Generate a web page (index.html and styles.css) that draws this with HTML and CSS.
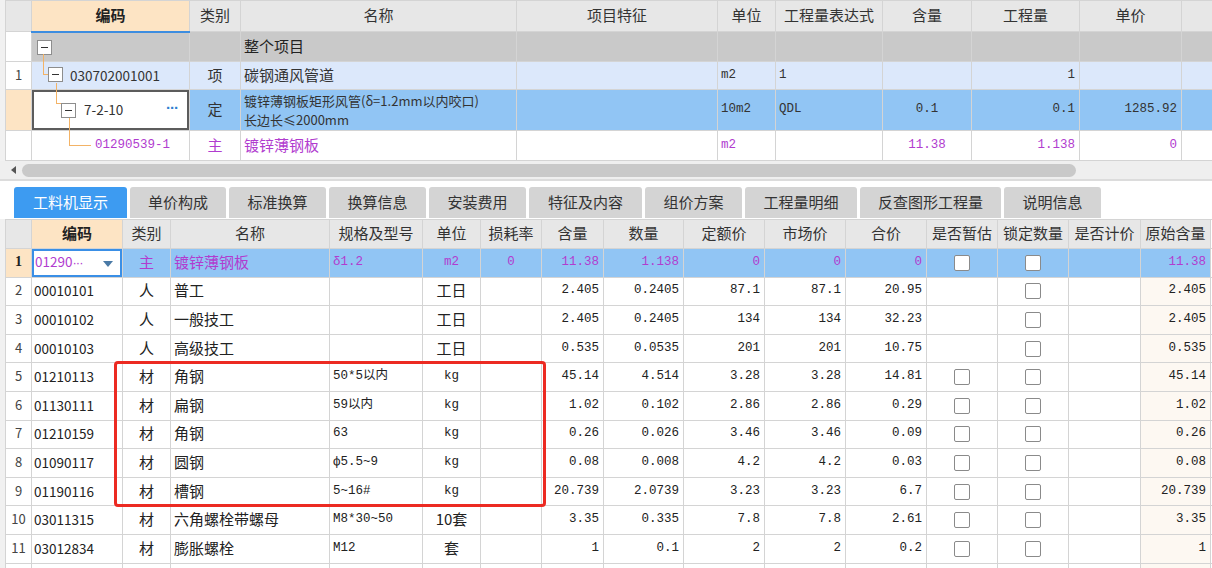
FILE: index.html
```html
<!DOCTYPE html>
<html lang="zh-CN">
<head>
<meta charset="utf-8">
<title>工料机显示</title>
<link rel="stylesheet" href="styles.css">
</head>
<body>
<div class="frame">
  <table class="grid top">
    <colgroup>
      <col style="width:26px"><col style="width:158px"><col style="width:51px"><col style="width:276px"><col style="width:201px"><col style="width:58px"><col style="width:107px"><col style="width:89px"><col style="width:108px"><col style="width:102px"><col style="width:31px">
    </colgroup>
    <tr class="hdr h31">
      <th class="rn"></th><th class="key key-top">编码</th><th>类别</th><th>名称</th><th>项目特征</th><th>单位</th><th>工程量表达式</th><th>含量</th><th>工程量</th><th>单价</th><th></th>
    </tr>
    <tr class="r-all h30">
      <td class="rn"></td>
      <td class="tree"><span class="tb tb0"></span></td>
      <td></td><td class="bold">整个项目</td><td></td><td></td><td></td><td></td><td></td><td></td><td></td>
    </tr>
    <tr class="r-item h28">
      <td class="rn">1</td>
      <td class="tree code1"><span class="elb elb1"></span><span class="tb tb1"></span>030702001001</td>
      <td class="c">项</td><td>碳钢通风管道</td><td></td><td class="m">m2</td><td class="m">1</td><td></td><td class="n">1</td><td></td><td></td>
    </tr>
    <tr class="r-sel h41">
      <td class="rn peach"></td>
      <td class="tree code2 selcell"><span class="elb elb2"></span><span class="tb tb2"></span>7-2-10<span class="dots">···</span></td>
      <td class="c">定</td><td class="wrap">镀锌薄钢板矩形风管(δ=1.2mm以内咬口)<br>长边长≤2000mm</td><td></td><td class="m">10m2</td><td class="m">QDL</td><td class="m c">0.1</td><td class="n">0.1</td><td class="n">1285.92</td><td></td>
    </tr>
    <tr class="r-main h30">
      <td class="rn"></td>
      <td class="tree code3 m"><span class="elb elb3"></span>01290539-1</td>
      <td class="c">主</td><td>镀锌薄钢板</td><td></td><td class="m">m2</td><td></td><td class="m c">11.38</td><td class="n">1.138</td><td class="n">0</td><td></td>
    </tr>
  </table>
</div>

<div class="hscroll">
  <svg class="arrow" width="6" height="8" viewBox="0 0 6 8"><path d="M5 0 L0 4 L5 8 Z" fill="#555"/></svg>
  <div class="thumb"></div>
</div>

<div class="tabs">
  <span class="tab active">工料机显示</span>
  <span class="tab">单价构成</span>
  <span class="tab">标准换算</span>
  <span class="tab">换算信息</span>
  <span class="tab">安装费用</span>
  <span class="tab">特征及内容</span>
  <span class="tab">组价方案</span>
  <span class="tab">工程量明细</span>
  <span class="tab">反查图形工程量</span>
  <span class="tab">说明信息</span>
</div>

<div class="bottom frame">
  <table class="grid bot">
    <colgroup>
      <col style="width:26px"><col style="width:91px"><col style="width:48px"><col style="width:159px"><col style="width:93px"><col style="width:58px"><col style="width:61px"><col style="width:62px"><col style="width:80px"><col style="width:81px"><col style="width:81px"><col style="width:81px"><col style="width:71px"><col style="width:71px"><col style="width:72px"><col style="width:70px"><col style="width:2px">
    </colgroup>
    <tr class="hdr hb">
      <th class="rn"></th><th class="key">编码</th><th>类别</th><th>名称</th><th>规格及型号</th><th>单位</th><th>损耗率</th><th>含量</th><th>数量</th><th>定额价</th><th>市场价</th><th>合价</th><th>是否暂估</th><th>锁定数量</th><th>是否计价</th><th>原始含量</th><th class="edge"></th>
    </tr>
    <tr class="row r-first">
      <td class="rn peach first-num">1</td>
      <td class="codecell"><span class="codetxt">01290<span class="ell">···</span></span><svg class="dd" width="10" height="6" viewBox="0 0 10 6"><path d="M0 0 H10 L5 6 Z" fill="#4a7aa6"/></svg></td>
      <td class="c">主</td><td>镀锌薄钢板</td><td class="m">δ1.2</td><td class="m c">m2</td><td class="m c">0</td><td class="n">11.38</td><td class="n">1.138</td><td class="n">0</td><td class="n">0</td><td class="n">0</td><td class="c"><span class="cb"></span></td><td class="c"><span class="cb"></span></td><td></td><td class="n">11.38</td><td class="edge"></td>
    </tr>
    <tr class="row"><td class="rn">2</td><td class="code">00010101</td><td class="c">人</td><td>普工</td><td></td><td class="c">工日</td><td></td><td class="n">2.405</td><td class="n">0.2405</td><td class="n">87.1</td><td class="n">87.1</td><td class="n">20.95</td><td></td><td class="c"><span class="cb"></span></td><td></td><td class="n orig">2.405</td><td class="edge"></td></tr>
    <tr class="row"><td class="rn">3</td><td class="code">00010102</td><td class="c">人</td><td>一般技工</td><td></td><td class="c">工日</td><td></td><td class="n">2.405</td><td class="n">0.2405</td><td class="n">134</td><td class="n">134</td><td class="n">32.23</td><td></td><td class="c"><span class="cb"></span></td><td></td><td class="n orig">2.405</td><td class="edge"></td></tr>
    <tr class="row"><td class="rn">4</td><td class="code">00010103</td><td class="c">人</td><td>高级技工</td><td></td><td class="c">工日</td><td></td><td class="n">0.535</td><td class="n">0.0535</td><td class="n">201</td><td class="n">201</td><td class="n">10.75</td><td></td><td class="c"><span class="cb"></span></td><td></td><td class="n orig">0.535</td><td class="edge"></td></tr>
    <tr class="row"><td class="rn">5</td><td class="code">01210113</td><td class="c">材</td><td>角钢</td><td class="m">50*5以内</td><td class="m c">kg</td><td></td><td class="n">45.14</td><td class="n">4.514</td><td class="n">3.28</td><td class="n">3.28</td><td class="n">14.81</td><td class="c"><span class="cb"></span></td><td class="c"><span class="cb"></span></td><td></td><td class="n orig">45.14</td><td class="edge"></td></tr>
    <tr class="row"><td class="rn">6</td><td class="code">01130111</td><td class="c">材</td><td>扁钢</td><td class="m">59以内</td><td class="m c">kg</td><td></td><td class="n">1.02</td><td class="n">0.102</td><td class="n">2.86</td><td class="n">2.86</td><td class="n">0.29</td><td class="c"><span class="cb"></span></td><td class="c"><span class="cb"></span></td><td></td><td class="n orig">1.02</td><td class="edge"></td></tr>
    <tr class="row"><td class="rn">7</td><td class="code">01210159</td><td class="c">材</td><td>角钢</td><td class="m">63</td><td class="m c">kg</td><td></td><td class="n">0.26</td><td class="n">0.026</td><td class="n">3.46</td><td class="n">3.46</td><td class="n">0.09</td><td class="c"><span class="cb"></span></td><td class="c"><span class="cb"></span></td><td></td><td class="n orig">0.26</td><td class="edge"></td></tr>
    <tr class="row"><td class="rn">8</td><td class="code">01090117</td><td class="c">材</td><td>圆钢</td><td class="m">ф5.5~9</td><td class="m c">kg</td><td></td><td class="n">0.08</td><td class="n">0.008</td><td class="n">4.2</td><td class="n">4.2</td><td class="n">0.03</td><td class="c"><span class="cb"></span></td><td class="c"><span class="cb"></span></td><td></td><td class="n orig">0.08</td><td class="edge"></td></tr>
    <tr class="row"><td class="rn">9</td><td class="code">01190116</td><td class="c">材</td><td>槽钢</td><td class="m">5~16#</td><td class="m c">kg</td><td></td><td class="n">20.739</td><td class="n">2.0739</td><td class="n">3.23</td><td class="n">3.23</td><td class="n">6.7</td><td class="c"><span class="cb"></span></td><td class="c"><span class="cb"></span></td><td></td><td class="n orig">20.739</td><td class="edge"></td></tr>
    <tr class="row"><td class="rn">10</td><td class="code">03011315</td><td class="c">材</td><td>六角螺栓带螺母</td><td class="m">M8*30~50</td><td class="c">10套</td><td></td><td class="n">3.35</td><td class="n">0.335</td><td class="n">7.8</td><td class="n">7.8</td><td class="n">2.61</td><td class="c"><span class="cb"></span></td><td class="c"><span class="cb"></span></td><td></td><td class="n orig">3.35</td><td class="edge"></td></tr>
    <tr class="row"><td class="rn">11</td><td class="code">03012834</td><td class="c">材</td><td>膨胀螺栓</td><td class="m">M12</td><td class="c">套</td><td></td><td class="n">1</td><td class="n">0.1</td><td class="n">2</td><td class="n">2</td><td class="n">0.2</td><td class="c"><span class="cb"></span></td><td class="c"><span class="cb"></span></td><td></td><td class="n orig">1</td><td class="edge"></td></tr>
    <tr class="row"><td class="rn"></td><td></td><td></td><td></td><td></td><td></td><td></td><td></td><td></td><td></td><td></td><td></td><td></td><td></td><td></td><td class="orig"></td><td class="edge"></td></tr>
  </table>
  <div class="redbox"></div>
</div>
</body>
</html>
```

FILE: styles.css
```css
* { box-sizing: border-box; }
html, body { margin: 0; padding: 0; }
body {
  width: 1212px;
  height: 568px;
  overflow: hidden;
  background: #fff;
  font-family: "Noto Sans CJK SC", "Noto Sans", sans-serif;
  font-size: 15px;
  color: #333;
}
.frame {
  border-left: 5px solid #f1f1f1;
}
.grid {
  border-collapse: collapse;
  table-layout: fixed;
  width: 1207px;
}
.grid th, .grid td {
  border: 1px solid #d4d4d4;
  padding: 0 3px 2px;
  white-space: nowrap;
  overflow: hidden;
  font-weight: normal;
  text-align: left;
  vertical-align: middle;
  line-height: 16px;
}
.grid th { text-align: center; background: #e7e7e7; color: #333; }
.grid th.key { background: #fde4c4; font-weight: bold; color: #222; }
.grid th.key-top { border-bottom: 2px solid #3d8de0; }
.grid .rn { text-align: center; padding: 0 0 2px; font-size: 13px; color: #444; background: #fff; }
.grid th.rn { background: #e7e7e7; }
.grid .peach { background: #fde4c4; }
.h31 { height: 31px; }
.h30 { height: 30px; }
.h28 { height: 28px; }
.h41 { height: 41px; }
.c { text-align: center !important; }
.m { font-family: "Liberation Mono", "Noto Sans CJK SC", monospace; font-size: 12.5px; }
.n { font-family: "Liberation Mono", "Noto Sans CJK SC", monospace; font-size: 12.5px; text-align: right !important; padding-right: 4px !important; }
.bold { font-weight: bold; color: #222; }

/* top table rows */
.r-all td { background: #c9c9c9; }
.r-all td.rn { background: #fff; }
.r-item td { background: #dce8fb; color: #333; }
.r-item td.rn { background: #fff; }
.r-sel td { background: #91c5f4; color: #333; }
.r-sel td.rn { background: #fde4c4; }
.r-main td { color: #b13ccf; }
.grid td.wrap { font-size: 13px; line-height: 19px; padding-top: 0; padding-bottom: 0; }

.tree { position: relative; overflow: visible !important; }
.code1, .code2 { font-size: 13.5px; }
.code1 { padding-left: 38px !important; }
.code2 { padding-left: 52px !important; }
.code3 { padding-left: 63px !important; }
.selcell {
  background: #fff !important;
  box-shadow: inset 0 0 0 2px #5c5c5c;
}
.dots {
  position: absolute;
  left: 134px;
  top: 10px;
  color: #2f7fd0;
  font-family: "Liberation Sans", sans-serif;
  font-size: 15px;
  font-weight: bold;
  letter-spacing: -1px;
}
.ell { font-family: "Liberation Sans", sans-serif; font-size: 13px; letter-spacing: -1px; }
.tb {
  position: absolute;
  width: 15px;
  height: 15px;
  border: 1px solid #8d8d8d;
  background: #fff;
}
.tb::after {
  content: "";
  position: absolute;
  left: 3px;
  right: 3px;
  top: 6px;
  height: 1px;
  background: #333;
}
.tb0 { left: 5px; top: 7px; }
.tb1 { left: 16px; top: 5px; }
.tb2 { left: 29px; top: 13px; }
.elb {
  position: absolute;
  border-left: 1px solid #f3b366;
  border-bottom: 1px solid #f3b366;
}
.elb1 { left: 11px; top: -8px; width: 5px; height: 21px; }
.elb2 { left: 24px; top: -7px; width: 5px; height: 21px; }
.elb3 { left: 37px; top: -13px; width: 22px; height: 28px; }

/* scrollbar */
.hscroll {
  height: 20px;
  background: #efefef;
  border-bottom: 2px solid #dcdcdc;
  display: flex;
  align-items: center;
  padding-left: 11px;
}
.arrow { flex: none; }
.thumb {
  margin-left: 5px;
  width: 1054px;
  height: 13px;
  border-radius: 7px;
  background: #c9c9c9;
}

/* tabs */
.tabs {
  display: flex;
  gap: 3px;
  padding: 6px 0 0 14px;
  height: 38px;
}
.tab {
  flex: none;
  width: 97px;
  height: 31px;
  line-height: 30px;
  padding: 0;
  text-align: center;
  background: #d4d4d4;
  color: #333;
  border-radius: 3px 3px 0 0;
  font-size: 15px;
}
.tab.active { background: #3d9bf1; color: #fff; width: 113px; }
.tab:nth-child(2) { width: 96px; }
.tab:nth-child(6) { width: 113px; }
.tab:nth-child(8) { width: 112px; }
.tab:nth-child(9) { width: 141px; }

/* bottom table */
.bottom { position: relative; }
.hb { height: 29px; }
.row { height: 28.6px; }
.row td { color: #222; }
.row td.code { font-size: 13.5px; padding-left: 2px; }
.r-first td { background: #91c5f4; color: #b13ccf; }
.r-first td.first-num { background: #fde4c4; font-family: "Liberation Serif", serif; font-weight: bold; font-size: 14px; color: #222; }
.codecell {
  background: #fff !important;
  box-shadow: inset 0 0 0 2px #3a8fe6;
  position: relative;
}
.codetxt { font-size: 13.5px; color: #b13ccf; }
.dd { position: absolute; right: 9px; top: 12px; }
.orig { background: #fdf8f2; }
.grid .edge { padding: 0; border-right: none; background: #fff; }
.cb {
  display: inline-block;
  width: 16px;
  height: 16px;
  border: 1px solid #8a8a8a;
  border-radius: 2px;
  background: #fff;
  vertical-align: middle;
}
.redbox {
  position: absolute;
  left: 109px;
  top: 142px;
  width: 432px;
  height: 146px;
  border: 3px solid #ec2a22;
  border-radius: 4px;
  pointer-events: none;
}
```
